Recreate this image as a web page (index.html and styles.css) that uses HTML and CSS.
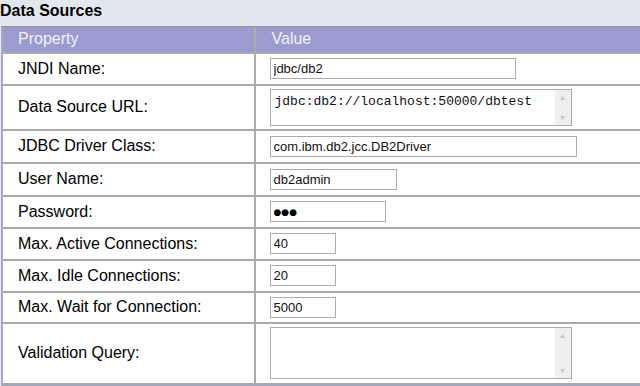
FILE: index.html
```html
<!DOCTYPE html>
<html lang="en">
<head>
    <meta charset="UTF-8">
    <title>Data Sources</title>
    <link rel="stylesheet" href="styles.css">
</head>
<body>
    <h3 class="title">Data Sources</h3>
    <div class="panel">
        <table class="props">
            <thead>
                <tr>
                    <th class="name">Property</th>
                    <th>Value</th>
                </tr>
            </thead>
            <tbody>
                <tr class="r32">
                    <td class="name">JNDI Name:</td>
                    <td><input class="w246" type="text" value="jdbc/db2"></td>
                </tr>
                <tr class="r45">
                    <td class="name">Data Source URL:</td>
                    <td>
                        <div class="tabox small">
                            <textarea>jdbc:db2://localhost:50000/dbtest</textarea>
                            <div class="sb"><span>&#9650;</span><span>&#9660;</span></div>
                        </div>
                    </td>
                </tr>
                <tr class="r33">
                    <td class="name">JDBC Driver Class:</td>
                    <td><input class="w307" type="text" value="com.ibm.db2.jcc.DB2Driver"></td>
                </tr>
                <tr class="r33">
                    <td class="name">User Name:</td>
                    <td><input class="w127" type="text" value="db2admin"></td>
                </tr>
                <tr class="r32">
                    <td class="name">Password:</td>
                    <td><input class="w116 pw" type="text" value="●●●"></td>
                </tr>
                <tr class="r32">
                    <td class="name">Max. Active Connections:</td>
                    <td><input class="w66" type="text" value="40"></td>
                </tr>
                <tr class="r32">
                    <td class="name">Max. Idle Connections:</td>
                    <td><input class="w66" type="text" value="20"></td>
                </tr>
                <tr class="r31">
                    <td class="name">Max. Wait for Connection:</td>
                    <td><input class="w66" type="text" value="5000"></td>
                </tr>
                <tr class="r61">
                    <td class="name">Validation Query:</td>
                    <td>
                        <div class="tabox big">
                            <textarea></textarea>
                            <div class="sb"><span>&#9650;</span><span>&#9660;</span></div>
                        </div>
                    </td>
                </tr>
            </tbody>
        </table>
    </div>
</body>
</html>
```

FILE: styles.css
```css
*{margin:0; padding:0; box-sizing:border-box}
body{
    background-color: #e4e8ee;
    font-family: "Liberation Sans", Arial, sans-serif;
    width: 660px;
}
.title{
    height: 26px;
    padding-top: 2px;
    font-size: 16px;
    font-weight: bold;
    color: #000;
}
.panel{
    margin-left: 1px;
    border-top: 1px solid #8f8fc8;
    border-left: 1px solid #a9a9d6;
    border-bottom: 3px solid #9d9dcf;
    background-color: #fff;
}
table{
    border-collapse: collapse;
    width: 100%;
}
th, td{
    border: 2px solid #ababab;
    border-top-width: 0;
    text-align: left;
    font-size: 16px;
    font-weight: normal;
    vertical-align: middle;
}
th{
    height: 25px;
    background-color: #9b9bcf;
    color: #f2f2fa;
    padding: 0 0 1px 16px;
    border-top: 1px solid #a0a0a0;
}
th:first-child, td:first-child{border-left-width: 1px}
td{
    color: #000;
    padding: 0 0 0 14px;
}
.name{
    width: 252px;
    padding-left: 15px;
}
.r31 td{height: 31px}
.r32 td{height: 32px}
.r33 td{height: 33px}
.r45 td{height: 45px}
.r61 td{height: 61px}
input{
    display: block;
    height: 21px;
    border: 1px solid #a9abad;
    padding: 0 3px;
    font-family: "Liberation Sans", Arial, sans-serif;
    font-size: 13px;
    color: #111;
    background: #fff;
    outline: none;
}
.pw{
    font-family: "DejaVu Sans", sans-serif;
    font-size: 9px;
    letter-spacing: 0;
    color: #000;
}
.w246{width: 246px}
.w307{width: 307px}
.w127{width: 127px}
.w116{width: 116px}
.w66{width: 66px}
.tabox{
    display: flex;
    width: 302px;
    border: 1px solid #a9abad;
    background: #fff;
}
.tabox.small{height: 37px}
.tabox.big{height: 52px}
.tabox textarea{
    flex: 1;
    border: none;
    padding: 4px 4px 2px;
    font-family: "Liberation Mono", "Courier New", monospace;
    font-size: 13px;
    color: #111;
    resize: none;
    overflow: hidden;
    outline: none;
}
.sb{
    width: 16px;
    background-color: #efefef;
    display: flex;
    flex-direction: column;
    justify-content: space-between;
    align-items: center;
    padding: 2px 0 1px;
    font-size: 7px;
    line-height: 12px;
    color: #c2c2c2;
}
```
